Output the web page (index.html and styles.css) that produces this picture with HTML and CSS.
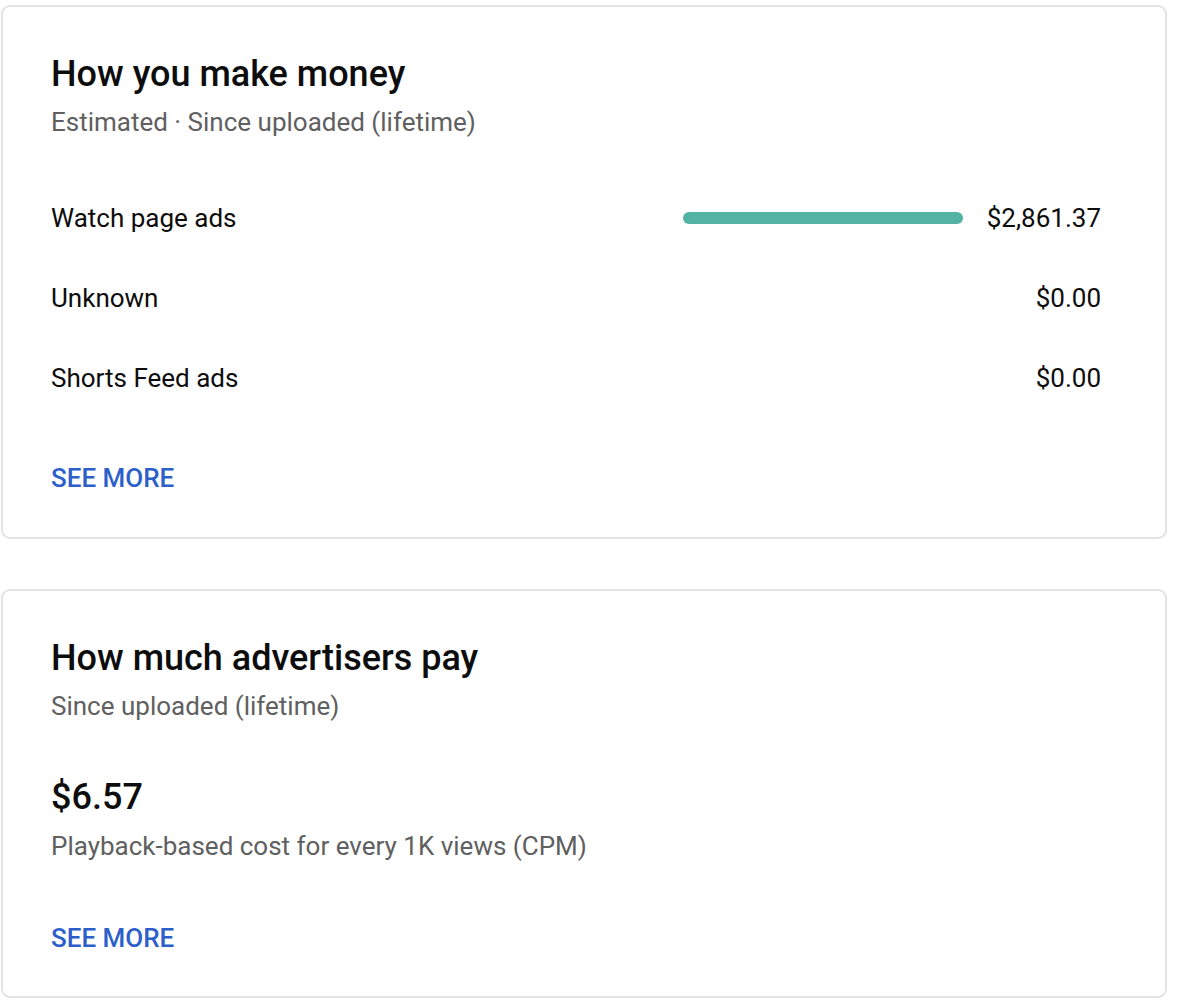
FILE: index.html
```html
<!DOCTYPE html>
<html lang="en">
<head>
<meta charset="utf-8">
<title>Revenue</title>
<link rel="stylesheet" href="styles.css">
</head>
<body>
<div class="page">
  <section class="card card-money">
    <h2 class="card-title">How you make money</h2>
    <div class="card-sub">Estimated · Since uploaded (lifetime)</div>
    <div class="rows">
      <div class="row">
        <span class="row-label">Watch page ads</span>
        <span class="row-bar"><span class="bar-fill" style="width:100%"></span></span>
        <span class="row-value">$2,861.37</span>
      </div>
      <div class="row">
        <span class="row-label">Unknown</span>
        <span class="row-value">$0.00</span>
      </div>
      <div class="row">
        <span class="row-label">Shorts Feed ads</span>
        <span class="row-value">$0.00</span>
      </div>
    </div>
    <a class="see-more see-more-1" href="#">SEE MORE</a>
  </section>

  <section class="card card-pay">
    <h2 class="card-title">How much advertisers pay</h2>
    <div class="card-sub">Since uploaded (lifetime)</div>
    <div class="metric">$6.57</div>
    <div class="metric-sub">Playback-based cost for every 1K views (CPM)</div>
    <a class="see-more see-more-2" href="#">SEE MORE</a>
  </section>
</div>
</body>
</html>
```

FILE: styles.css
```css
* { box-sizing: border-box; }
html, body { margin: 0; padding: 0; background: #fff; }
body {
  font-family: Roboto, "Noto Sans", Arial, sans-serif;
  color: #0d0d0d;
  width: 1182px;
  height: 1006px;
  overflow: hidden;
}
.page {
  padding: 5px 0 0 1px;
  width: 1167px;
  display: flex;
  flex-direction: column;
  gap: 50px;
}
.card {
  border: 2px solid #e3e3e3;
  border-radius: 9px;
  padding: 47px 64px 0 48px;
  display: flex;
  flex-direction: column;
  align-items: stretch;
}
.card-money { height: 534px; }
.card-pay { height: 409px; }
.card-title {
  margin: 0;
  font-size: 36px;
  line-height: 40px;
  font-weight: 500;
  color: #0d0d0d;
}
.card-sub {
  margin-top: 12px;
  font-size: 26px;
  line-height: 32px;
  color: #606060;
}
.rows {
  margin-top: 40px;
  display: flex;
  flex-direction: column;
}
.row {
  height: 80px;
  display: flex;
  align-items: center;
  font-size: 26px;
  line-height: 32px;
}
.row-label { flex: 1; }
.row-bar {
  width: 280px;
  height: 12px;
  margin-right: 24px;
  display: flex;
}
.bar-fill {
  display: block;
  height: 12px;
  border-radius: 6px;
  background: #52b2a4;
}
.row-value { text-align: right; }
.see-more {
  align-self: flex-start;
  font-size: 26px;
  line-height: 32px;
  font-weight: 500;
  color: #2d5fcb;
  text-decoration: none;
}
.see-more-1 { margin-top: 44px; }
.metric {
  margin-top: 55px;
  font-size: 36px;
  line-height: 40px;
  font-weight: 500;
}
.metric-sub {
  margin-top: 13px;
  font-size: 26px;
  line-height: 32px;
  color: #606060;
}
.see-more-2 { margin-top: 60px; }
```
